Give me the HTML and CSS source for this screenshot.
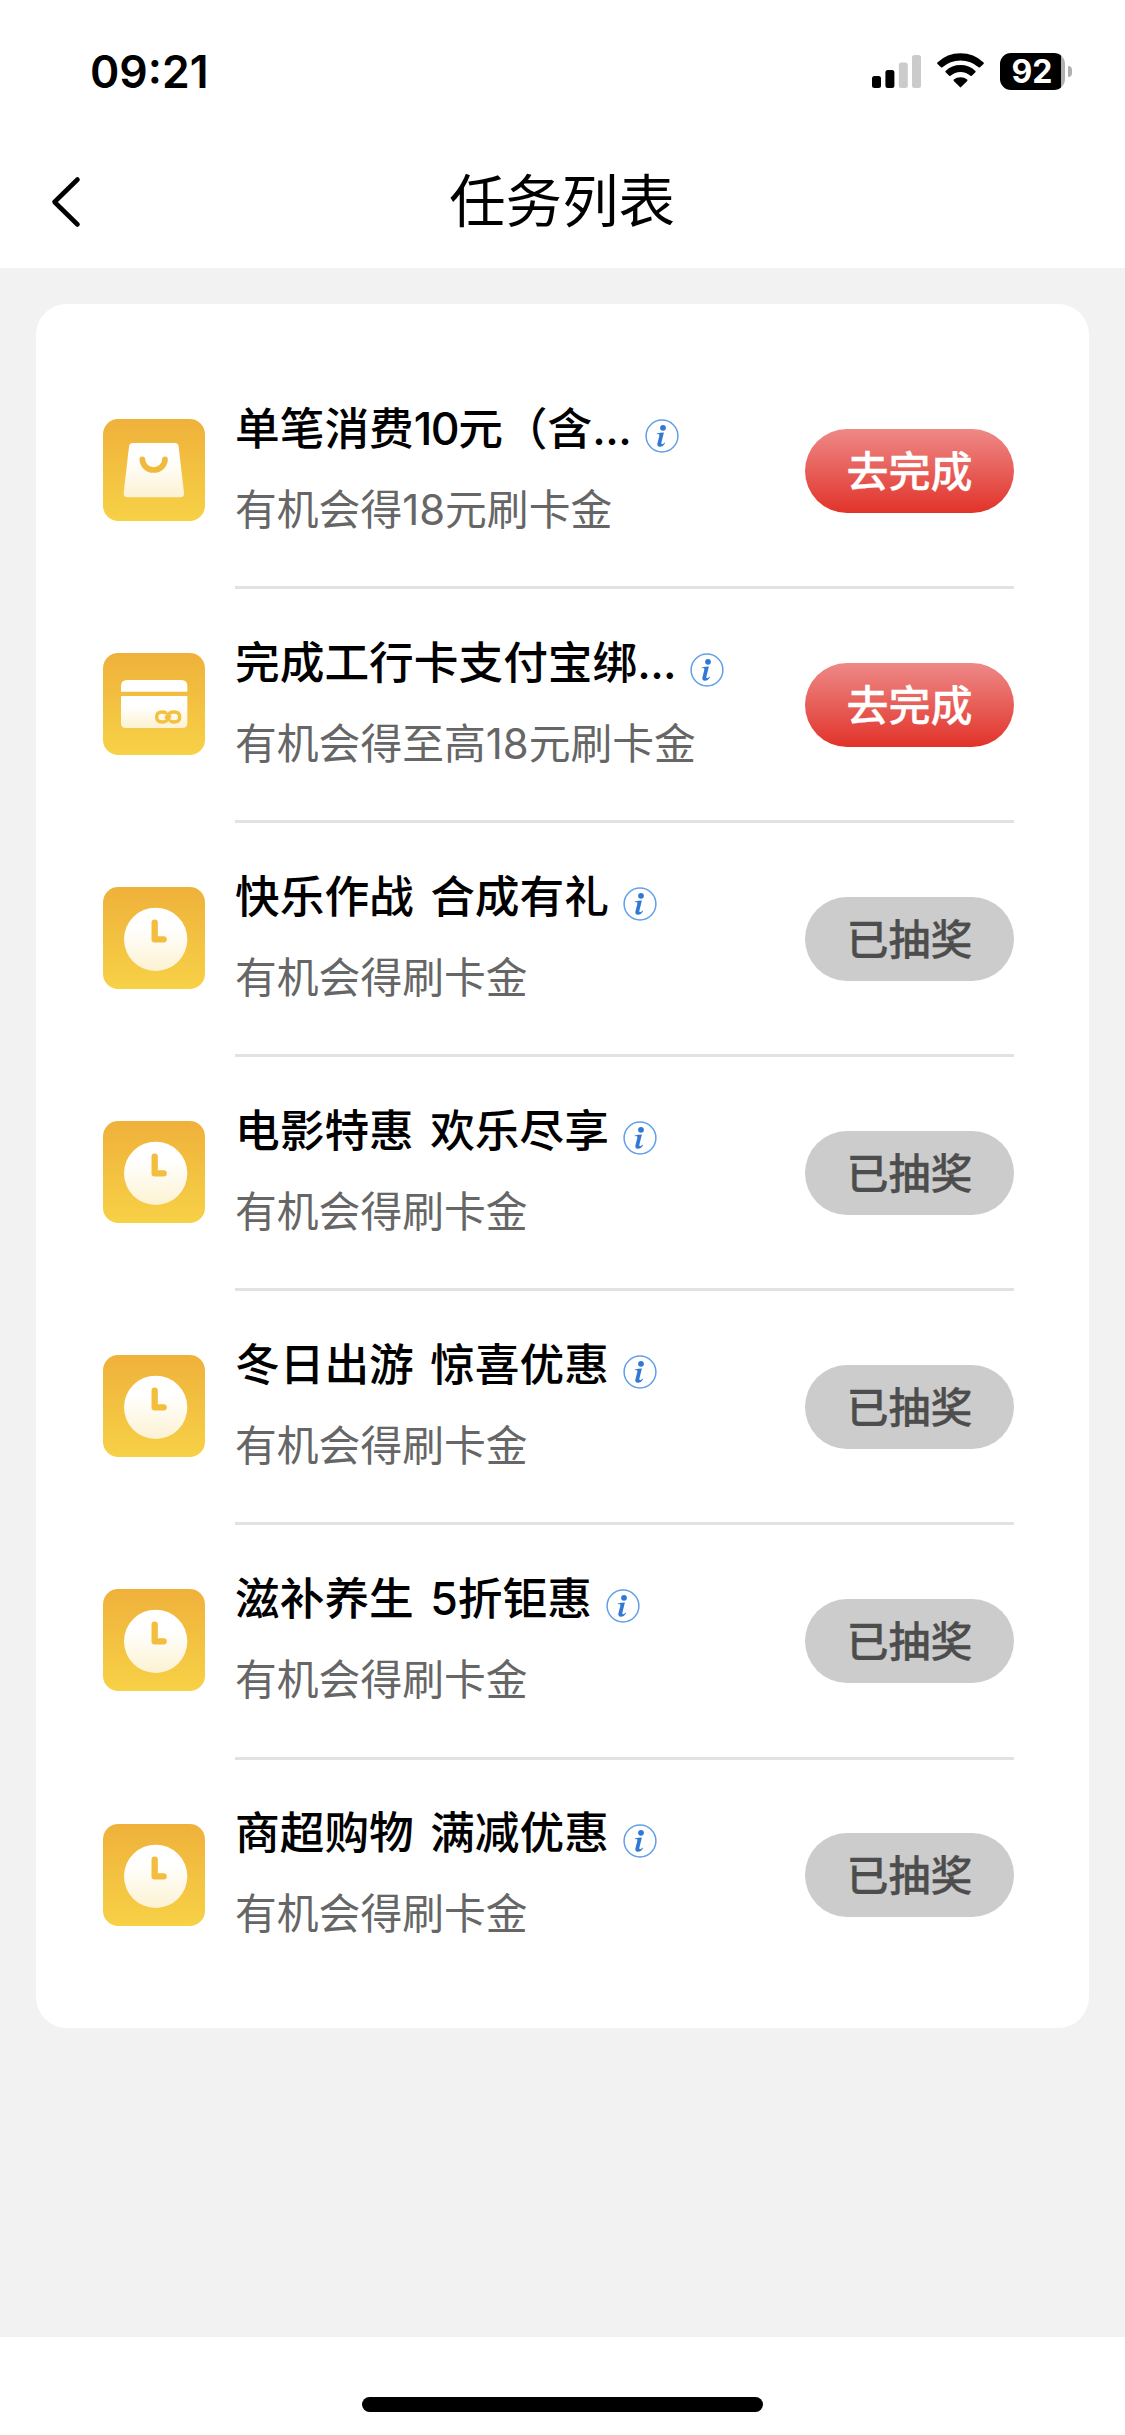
FILE: index.html
```html
<!DOCTYPE html>
<html lang="zh-CN">
<head>
<meta charset="UTF-8">
<title>任务列表</title>
<link rel="stylesheet" href="styles.css">
</head>
<body>
<svg class="defs" width="0" height="0" aria-hidden="true">
  <defs>
    <linearGradient id="gold" x1="0" y1="0" x2="0" y2="1"><stop offset="0" stop-color="#efb13b"/><stop offset="1" stop-color="#f7d146"/></linearGradient>
    <linearGradient id="cream" x1="0" y1="0" x2="0" y2="1"><stop offset="0.3" stop-color="#fff"/><stop offset="1" stop-color="#fcf2d2"/></linearGradient>
    <symbol id="bag" viewBox="0 0 306 306">
      <rect width="306" height="306" rx="46" fill="url(#gold)"/>
      <path d="M90 72H215Q226 72 227 83L243 222Q244 235 231 235H74Q61 235 62 222L78 83Q79 72 90 72Z" fill="url(#cream)"/>
      <path d="M118 121A34 32 0 0 0 186 121" fill="none" stroke="#f1b93d" stroke-width="17" stroke-linecap="round"/>
    </symbol>
    <symbol id="card" viewBox="0 0 306 306">
      <rect width="306" height="306" rx="46" fill="url(#gold)"/>
      <path d="M54 116V99Q54 81 72 81H235Q253 81 253 99V116Z" fill="#fff"/>
      <path d="M54 129H253V211Q253 225 239 225H68Q54 225 54 211Z" fill="url(#cream)"/>
      <path d="M188 179Q184 177 177 177Q161 177 161 192Q161 207 177 207H181Q190 207 197 197Q200 193 200 190" fill="none" stroke="#f3c140" stroke-width="10" stroke-linecap="round"/>
      <path d="M203 205Q207 207 214 207Q230 207 230 192Q230 177 214 177H210Q201 177 194 187Q190 191 190 194" fill="none" stroke="#f3c140" stroke-width="10" stroke-linecap="round"/>
    </symbol>
    <symbol id="clock" viewBox="0 0 306 306">
      <rect width="306" height="306" rx="46" fill="url(#gold)"/>
      <circle cx="158" cy="157" r="95" fill="url(#cream)"/>
      <path d="M155 107V157H182" fill="none" stroke="#f3bd3e" stroke-width="19" stroke-linecap="round" stroke-linejoin="round"/>
    </symbol>
    <symbol id="info" viewBox="0 0 34 34">
      <circle cx="17" cy="17" r="15.9" fill="#fff" stroke="#629fe9" stroke-width="1.5"/>
      <circle cx="18" cy="8.8" r="2.9" fill="#3078d4"/>
      <path d="M11.8 14.4Q15 13.6 18.9 13.4L16.4 23.5Q16 25.5 17.2 25.3Q18.4 25 19.6 23.5L20 24.2Q18 27.7 14.8 27.7Q11.8 27.6 12.4 24.5L14.3 17Q14.7 15.1 13.4 15.1L11.7 15.2Z" fill="#3078d4"/>
    </symbol>
  </defs>
</svg>
<div class="screen">
  <header class="status">
    <span class="time">09:21</span>
    <div class="indicators">
      <svg class="signal" viewBox="0 0 49 35"><rect y="22" width="9" height="12" rx="2.5"/><rect x="13.4" y="16" width="9" height="18" rx="2.5"/><g fill="#cbcbcb"><rect x="26.8" y="8.5" width="9" height="25.5" rx="2.5"/><rect x="40" y="1" width="9" height="33" rx="2.5"/></g></svg>
      <svg class="wifi" viewBox="0 0 47 35"><path d="M0.4 9.5Q-.1 10.2.5 10.9L4 14.3Q4.7 14.9 5.4 14.3Q13 7.4 23.5 7.4T41.6 14.3Q42.3 14.9 43 14.3L46.5 10.9Q47.1 10.2 46.6 9.5Q37 .3 23.5 .3T.4 9.5Z"/><path d="M8.6 18Q8 18.7 8.6 19.3L12.2 22.8Q12.9 23.3 13.5 22.8Q17.7 19 23.5 19T33.5 22.8Q34.1 23.3 34.8 22.8L38.4 19.3Q39 18.7 38.4 18Q32.2 12.1 23.5 12.1T8.6 18Z"/><path d="M16.8 26.6Q16.2 27.2 16.8 27.9L22.9 34.1Q23.5 34.7 24.1 34.1L30.2 27.9Q30.8 27.2 30.2 26.6Q27.4 24.3 23.5 24.3T16.8 26.6Z"/></svg>
      <div class="battery"><span class="level">92</span></div><i class="nub"></i>
    </div>
  </header>
  <nav class="nav">
    <svg class="back" viewBox="0 0 30 54"><path d="M26.5 4.5L3.5 27L26.5 49.5" fill="none" stroke="#000" stroke-width="4.6" stroke-linecap="round" stroke-linejoin="round"/></svg>
    <h1 class="title">任务列表</h1>
  </nav>
  <main class="content">
    <ul class="tasks">
      <li class="task"><svg class="icon"><use href="#bag"/></svg><div class="body"><div class="text"><div class="name"><b>单笔消费<span class="num">10</span>元（含<span class="dots">...</span></b><svg class="info"><use href="#info"/></svg></div><p class="desc">有机会得18元刷卡金</p></div><button class="btn go">去完成</button></div></li>
      <li class="task"><svg class="icon"><use href="#card"/></svg><div class="body"><div class="text"><div class="name"><b>完成工行卡支付宝绑<span class="dots">...</span></b><svg class="info"><use href="#info"/></svg></div><p class="desc">有机会得至高18元刷卡金</p></div><button class="btn go">去完成</button></div></li>
      <li class="task"><svg class="icon"><use href="#clock"/></svg><div class="body"><div class="text"><div class="name"><b>快乐作战 合成有礼</b><svg class="info"><use href="#info"/></svg></div><p class="desc">有机会得刷卡金</p></div><button class="btn">已抽奖</button></div></li>
      <li class="task"><svg class="icon"><use href="#clock"/></svg><div class="body"><div class="text"><div class="name"><b>电影特惠 欢乐尽享</b><svg class="info"><use href="#info"/></svg></div><p class="desc">有机会得刷卡金</p></div><button class="btn">已抽奖</button></div></li>
      <li class="task"><svg class="icon"><use href="#clock"/></svg><div class="body"><div class="text"><div class="name"><b>冬日出游 惊喜优惠</b><svg class="info"><use href="#info"/></svg></div><p class="desc">有机会得刷卡金</p></div><button class="btn">已抽奖</button></div></li>
      <li class="task"><svg class="icon"><use href="#clock"/></svg><div class="body"><div class="text"><div class="name"><b>滋补养生 5折钜惠</b><svg class="info"><use href="#info"/></svg></div><p class="desc">有机会得刷卡金</p></div><button class="btn">已抽奖</button></div></li>
      <li class="task"><svg class="icon"><use href="#clock"/></svg><div class="body"><div class="text"><div class="name"><b>商超购物 满减优惠</b><svg class="info"><use href="#info"/></svg></div><p class="desc">有机会得刷卡金</p></div><button class="btn">已抽奖</button></div></li>
    </ul>
  </main>
  <footer class="home"><span class="bar"></span></footer>
</div>
</body>
</html>
```
FILE: styles.css
```css
* { box-sizing: border-box; margin: 0; padding: 0; }
body { background: #fff; color: #000; font-family: Inter, "Noto Sans CJK SC", sans-serif; }
.defs { display: block; height: 0; }
.screen { display: flex; flex-direction: column; width: 1125px; height: 2435px; }

.status { display: flex; justify-content: space-between; height: 134px; padding: 53px 53px 0 90px; }
.time { font-size: 44.5px; font-weight: 600; line-height: 38px; }
.indicators { display: flex; align-items: flex-start; }
.signal { width: 49px; height: 35px; margin: 1px 16px 0 0; }
.wifi { width: 47px; height: 35px; margin-right: 16px; }
.battery { display: flex; align-items: center; width: 65px; height: 37px; border-radius: 11px; background: linear-gradient(90deg, #000 61px, #b0b0b0 61px); }
.level { width: 64px; color: #fff; text-align: center; font-size: 32px; line-height: 40px; font-weight: 700; }
.nub { width: 4px; height: 11px; margin: 13px 0 0 3px; border-radius: 0 4px 4px 0; background: #b0b0b0; }

.nav { display: grid; grid-template-columns: 100px 1fr 100px; align-items: center; height: 134px; }
.back { width: 30px; height: 54px; margin: 1px 0 0 51px; }
.title { padding: 2px 1px 0 0; text-align: center; font-size: 56.4px; line-height: 80px; font-weight: 400; }

.content { flex: 1; padding: 36px 36px 0; background: #f2f2f2; }
.tasks { height: 1724px; padding: 51px 75px 0 67px; border-radius: 31px; background: #fff; list-style: none; }
.task { display: flex; align-items: stretch; gap: 30px; height: 234.1px; }
.icon { width: 102px; height: 102px; margin-top: 64px; flex: none; }
.body { display: flex; flex: 1; justify-content: space-between; align-items: center; border-bottom: 3px solid #e2e2e2; }
.task:last-child .body { border-bottom-color: transparent; }
.text { align-self: flex-start; padding-top: 41.5px; }
.name { display: flex; align-items: center; height: 64px; }
.name b { font-size: 44.7px; font-weight: 500; line-height: 64px; white-space: nowrap; word-spacing: 4.5px; }
.num { letter-spacing: -1.5px; }
.dots { letter-spacing: -0.6px; }
.info { width: 34px; height: 34px; margin: 15px 0 0 14px; flex: none; }
.desc { margin-top: 19px; color: #666; font-size: 41.8px; line-height: 60px; white-space: nowrap; }
.btn { width: 209px; height: 84px; padding-top: 2px; border: 0; border-radius: 42px; background: #ccc; color: #4d4d4d; font: 500 42px/82px Inter, "Noto Sans CJK SC", sans-serif; -webkit-text-stroke: 0.3px; }
.go { background: linear-gradient(#ee8987, #e1332a); color: #fff; }

.home { display: flex; justify-content: center; align-items: flex-start; height: 98px; padding-top: 60px; }
.bar { width: 401px; height: 15px; border-radius: 8px; background: #000; }
```
